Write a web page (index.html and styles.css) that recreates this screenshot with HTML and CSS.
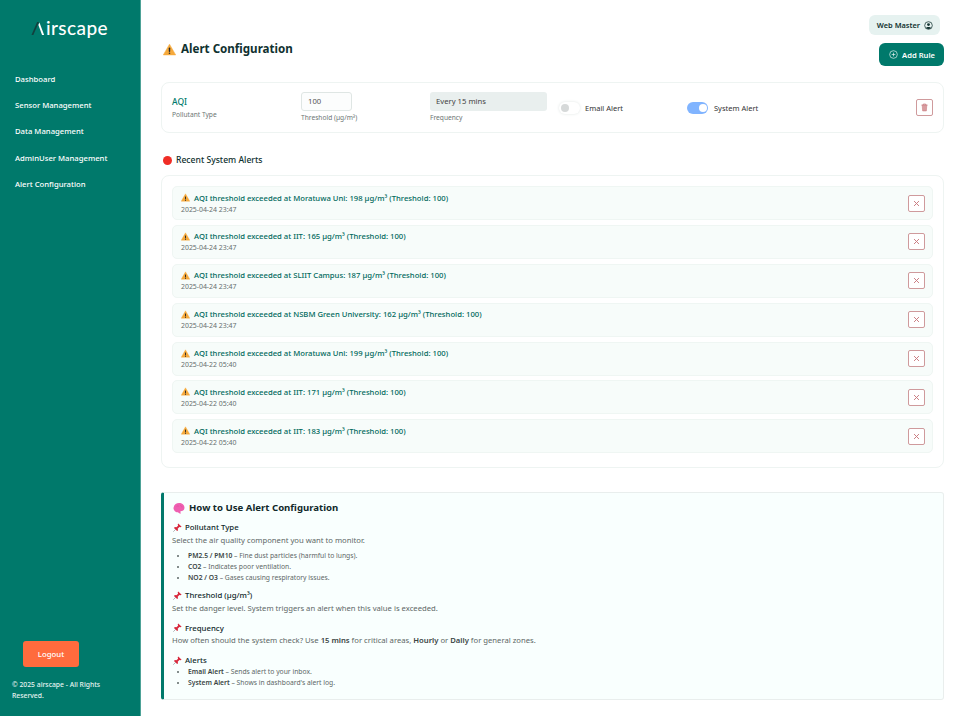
FILE: index.html
```html
<!DOCTYPE html>
<html lang="en">
<head>
<meta charset="utf-8">
<title>Alert Configuration</title>
<link rel="stylesheet" href="styles.css">
</head>
<body>
<svg class="defs" width="0" height="0" aria-hidden="true">
  <defs>
    <symbol id="warn" viewBox="0 0 24 24">
      <path d="M12 2.2 23.4 22H.6Z" fill="#f6a93b" stroke="#f6a93b" stroke-linejoin="round" stroke-width="1"/>
      <rect x="10.7" y="8.5" width="2.6" height="8" rx="1.2" fill="#2b2b2b"/>
      <circle cx="12" cy="19" r="1.5" fill="#2b2b2b"/>
    </symbol>
    <symbol id="pin" viewBox="0 0 24 24">
      <path d="M14 1 23 10 20 11.500 17 10.500 12.500 15 13.500 19 11 21.500 2.500 13 5 10.500 9 11.500 13.500 7 12.500 4Z" fill="#d9283c"/>
      <path d="M7 17 1.500 22.500" stroke="#8a8f94" stroke-width="1.800" stroke-linecap="round"/>
    </symbol>
    <symbol id="close" viewBox="0 0 16 16">
      <path d="M5 5 11 11M11 5 5 11" stroke="#c9797e" stroke-width="1.200" fill="none"/>
    </symbol>
  </defs>
</svg>
<div class="app">
  <aside class="sidebar">
    <div class="logo">
      <svg class="logo-mark" viewBox="0 0 16 16" aria-hidden="true">
        <path d="M.5 15 6.500 1H8.500L2.500 15Z" fill="#12403f"/>
        <path d="M9 1.500 14 15H11.800L7.900 4.200Z" fill="#ffffff"/>
      </svg>
      <span>irscape</span>
    </div>
    <nav class="nav">
      <a>Dashboard</a>
      <a>Sensor Management</a>
      <a>Data Management</a>
      <a>AdminUser Management</a>
      <a>Alert Configuration</a>
    </nav>
    <div class="side-foot">
      <button class="logout">Logout</button>
      <p class="copy">© 2025 airscape - All Rights Reserved.</p>
    </div>
  </aside>
  <main class="main">
    <header class="top">
      <h1 class="title"><svg class="ic-title"><use href="#warn"/></svg>Alert Configuration</h1>
      <div class="top-actions">
        <div class="user">Web Master
          <svg class="user-ic" viewBox="0 0 16 16" aria-hidden="true">
            <circle cx="8" cy="8" r="6.800" fill="none" stroke="#10312f" stroke-width="1.300"/>
            <circle cx="8" cy="6.300" r="2.500" fill="#10312f"/>
            <path d="M3.500 12.500C4.500 10 11.500 10 12.500 12.500 10 15 6 15 3.500 12.500Z" fill="#10312f"/>
          </svg>
        </div>
        <button class="add">
          <svg class="add-ic" viewBox="0 0 16 16" aria-hidden="true">
            <circle cx="8" cy="8" r="6.800" fill="none" stroke="#fff" stroke-width="1.100"/>
            <path d="M8 4.700V11.300M4.700 8H11.300" stroke="#fff" stroke-width="1.100"/>
          </svg>Add Rule
        </button>
      </div>
    </header>

    <section class="card rule">
      <div class="f-type">
        <div class="aqi">AQI</div>
        <div class="cap">Pollutant Type</div>
      </div>
      <div class="f-th">
        <div class="input">100</div>
        <div class="cap">Threshold (µg/m³)</div>
      </div>
      <div class="f-freq">
        <div class="select">Every 15 mins</div>
        <div class="cap">Frequency</div>
      </div>
      <div class="f-email">
        <span class="switch off"><i></i></span>
        <span class="sw-label">Email Alert</span>
      </div>
      <div class="f-sys">
        <span class="switch on"><i></i></span>
        <span class="sw-label">System Alert</span>
      </div>
      <button class="del trash" aria-label="Delete">
        <svg viewBox="0 0 16 16" aria-hidden="true">
          <path d="M3.500 4.500H12.500M6.300 4.300V3H9.700V4.300" stroke="#c9797e" stroke-width="1.100" fill="none"/>
          <path d="M4.700 4.500 5.300 13H10.700L11.300 4.500Z" fill="#d99ea1" stroke="#c9797e" stroke-width=".8"/>
        </svg>
      </button>
    </section>

    <h2 class="recent"><i class="dot"></i>Recent System Alerts</h2>

    <section class="card alerts">
      <article class="alert">
        <div class="a-body">
          <div class="a-msg"><svg class="ic-a"><use href="#warn"/></svg>AQI threshold exceeded at Moratuwa Uni: 198 µg/m³ (Threshold: 100)</div>
          <div class="a-time">2025-04-24 23:47</div>
        </div>
        <button class="del" aria-label="Dismiss"><svg viewBox="0 0 16 16"><use href="#close"/></svg></button>
      </article>
      <article class="alert">
        <div class="a-body">
          <div class="a-msg"><svg class="ic-a"><use href="#warn"/></svg>AQI threshold exceeded at IIT: 165 µg/m³ (Threshold: 100)</div>
          <div class="a-time">2025-04-24 23:47</div>
        </div>
        <button class="del" aria-label="Dismiss"><svg viewBox="0 0 16 16"><use href="#close"/></svg></button>
      </article>
      <article class="alert">
        <div class="a-body">
          <div class="a-msg"><svg class="ic-a"><use href="#warn"/></svg>AQI threshold exceeded at SLIIT Campus: 187 µg/m³ (Threshold: 100)</div>
          <div class="a-time">2025-04-24 23:47</div>
        </div>
        <button class="del" aria-label="Dismiss"><svg viewBox="0 0 16 16"><use href="#close"/></svg></button>
      </article>
      <article class="alert">
        <div class="a-body">
          <div class="a-msg"><svg class="ic-a"><use href="#warn"/></svg>AQI threshold exceeded at NSBM Green University: 162 µg/m³ (Threshold: 100)</div>
          <div class="a-time">2025-04-24 23:47</div>
        </div>
        <button class="del" aria-label="Dismiss"><svg viewBox="0 0 16 16"><use href="#close"/></svg></button>
      </article>
      <article class="alert">
        <div class="a-body">
          <div class="a-msg"><svg class="ic-a"><use href="#warn"/></svg>AQI threshold exceeded at Moratuwa Uni: 199 µg/m³ (Threshold: 100)</div>
          <div class="a-time">2025-04-22 05:40</div>
        </div>
        <button class="del" aria-label="Dismiss"><svg viewBox="0 0 16 16"><use href="#close"/></svg></button>
      </article>
      <article class="alert">
        <div class="a-body">
          <div class="a-msg"><svg class="ic-a"><use href="#warn"/></svg>AQI threshold exceeded at IIT: 171 µg/m³ (Threshold: 100)</div>
          <div class="a-time">2025-04-22 05:40</div>
        </div>
        <button class="del" aria-label="Dismiss"><svg viewBox="0 0 16 16"><use href="#close"/></svg></button>
      </article>
      <article class="alert">
        <div class="a-body">
          <div class="a-msg"><svg class="ic-a"><use href="#warn"/></svg>AQI threshold exceeded at IIT: 183 µg/m³ (Threshold: 100)</div>
          <div class="a-time">2025-04-22 05:40</div>
        </div>
        <button class="del" aria-label="Dismiss"><svg viewBox="0 0 16 16"><use href="#close"/></svg></button>
      </article>
    </section>

    <section class="guide">
      <h3 class="g-title">
        <svg class="ic-brain" viewBox="0 0 24 24" aria-hidden="true">
          <path d="M6 20C2 18 0 14 1.500 10 2.500 5 7 2 12 2 18 2 23 6 23 11.500 23 16 19 18.500 15 18.500 14.500 20.500 15 22 16 23 13 23 11 22 10 20.500 8.500 21 7 20.500 6 20Z" fill="#ee5fb0"/>
          <path d="M7 9C9 7 11 8 12 9M14 7C16 7 18 8 18 11" stroke="#d8469a" stroke-width="1" fill="none"/>
        </svg>How to Use Alert Configuration
      </h3>
      <h4 class="g-head"><svg class="ic-pin"><use href="#pin"/></svg>Pollutant Type</h4>
      <p class="g-text">Select the air quality component you want to monitor.</p>
      <ul class="g-list first">
        <li><b>PM2.5 / PM10</b> – Fine dust particles (harmful to lungs).</li>
        <li><b>CO2</b> – Indicates poor ventilation.</li>
        <li><b>NO2 / O3</b> – Gases causing respiratory issues.</li>
      </ul>
      <h4 class="g-head"><svg class="ic-pin"><use href="#pin"/></svg>Threshold (µg/m³)</h4>
      <p class="g-text">Set the danger level. System triggers an alert when this value is exceeded.</p>
      <h4 class="g-head"><svg class="ic-pin"><use href="#pin"/></svg>Frequency</h4>
      <p class="g-text">How often should the system check? Use <b>15 mins</b> for critical areas, <b>Hourly</b> or <b>Daily</b> for general zones.</p>
      <h4 class="g-head"><svg class="ic-pin"><use href="#pin"/></svg>Alerts</h4>
      <ul class="g-list tight">
        <li><b>Email Alert</b> – Sends alert to your inbox.</li>
        <li><b>System Alert</b> – Shows in dashboard's alert log.</li>
      </ul>
    </section>
  </main>
</div>
</body>
</html>
```
FILE: styles.css
```css
* { box-sizing: border-box; }
html, body { margin: 0; padding: 0; background: #fff; }
body { font-family: "Noto Sans", "Open Sans", sans-serif; color: #10312f; overflow: hidden; }
.defs { position: absolute; }
.app { display: flex; height: 716px; }

.sidebar { width: 141px; flex: none; background: #00796b; border-right: 1px solid #4da297; display: flex; flex-direction: column; color: #fff; padding: 0 12px 0 15px; }
.logo { display: flex; align-items: center; justify-content: center; height: 20px; margin: 18px 4px 0 0; font-family: "Lato", sans-serif; font-size: 19px; line-height: 20px; font-weight: 500; letter-spacing: .4px; }
.logo-mark { width: 15px; height: 15px; }
.nav { display: flex; flex-direction: column; gap: 14.2px; margin-top: 35px; }
.nav a { font-size: 7.7px; line-height: 12px; font-weight: 500; white-space: nowrap; }
.side-foot { margin-top: auto; padding-bottom: 15px; margin-left: -3px; }
.logout { display: block; margin-left: 11px; width: 56px; height: 26px; background: #ff6b3d; border: 0; border-radius: 3px; color: #fff; font: 500 7.8px "Noto Sans", sans-serif; }
.copy { margin: 12px 0 0; font-size: 6.8px; line-height: 11px; font-weight: 500; color: #e6f4f1; }

.main { flex: 1; min-width: 0; padding: 15px 20px 0 20px; }
.top { display: flex; justify-content: space-between; align-items: flex-start; height: 67px; }
.title { margin: 26px 0 0 2px; display: flex; align-items: center; font-size: 11.6px; line-height: 16px; font-weight: 700; }
.ic-title { width: 13px; height: 13px; margin-right: 5px; }
.top-actions { display: flex; flex-direction: column; align-items: flex-end; }
.user { display: flex; align-items: center; gap: 4px; height: 20px; padding: 0 7px 0 8px; margin-right: 4px; background: #e6f2f0; border-radius: 6px; font-size: 7.4px; font-weight: 600; }
.user-ic { width: 9px; height: 9px; }
.add { display: flex; align-items: center; gap: 4px; height: 23px; margin-top: 8px; padding: 0 9px 0 10px; background: #00796b; border: 0; border-radius: 6px; color: #fff; font: 600 7.6px "Noto Sans", sans-serif; }
.add-ic { width: 9px; height: 9px; }

.card { background: #fff; border: 1px solid #eef4f2; border-radius: 8px; }
.rule { display: flex; align-items: center; height: 51px; padding: 0 10px; }
.f-type { width: 129px; }
.aqi { font-size: 8.5px; line-height: 12px; font-weight: 500; color: #00796b; }
.cap { font-size: 6.65px; line-height: 10px; margin-top: 2px; color: #6d7675; }
.f-th { width: 129px; }
.input { width: 51px; height: 19px; padding: 0 6px; border: 1px solid #dfe6e4; border-radius: 3px; background: #fcfdfd; font-size: 7.7px; line-height: 17px; color: #555; }
.f-freq { width: 129px; }
.select { width: 117px; height: 19px; padding: 0 6px; background: #e9efee; border-radius: 3px; font-size: 7.7px; line-height: 19px; color: #444; }
.f-email { width: 128px; display: flex; align-items: center; gap: 5px; }
.f-sys { display: flex; align-items: center; gap: 6px; flex: 1; }
.sw-label { font-size: 7.5px; color: #333; }
.switch { width: 21px; height: 12px; border-radius: 6px; display: flex; align-items: center; padding: 0 1.5px; }
.switch i { display: block; width: 8px; height: 8px; border-radius: 50%; }
.switch.off { background: #fff; box-shadow: 0 0 3px #dfe5e3; }
.switch.off i { background: #d6d9d9; }
.switch.on { background: #80b4ff; justify-content: flex-end; }
.switch.on i { background: #fff; }

.del { flex: none; width: 17px; height: 17px; padding: 0; background: #fff; border: 1px solid #cf9a9c; border-radius: 2px; display: flex; align-items: center; justify-content: center; }
.del svg { width: 13px; height: 13px; }
.trash svg { width: 11px; height: 11px; }

.recent { margin: 21px 0 9px 2px; display: flex; align-items: center; height: 12px; font-size: 8.6px; line-height: 12px; font-weight: 500; }
.dot { width: 9px; height: 9px; border-radius: 50%; background: #f02d26; margin-right: 4px; }

.alerts { height: 293px; padding: 10px; display: flex; flex-direction: column; gap: 4.9px; }
.alert { height: 34px; flex: none; display: flex; align-items: center; justify-content: space-between; padding: 0 7px 0 8px; background: #f7fcfa; border: 1px solid #eff6f3; border-radius: 5px; }
.a-msg { display: flex; align-items: center; font-size: 7.7px; line-height: 12px; font-weight: 500; color: #00695c; }
.ic-a { width: 9px; height: 9px; margin-right: 4px; }
.a-time { font-size: 6.9px; line-height: 10px; margin-top: 1px; color: #666f6e; }

.guide { margin-top: 24px; height: 208px; padding: 8px 10px 0 8px; background: #f9fffe; border: 1px solid #e9eeed; border-left: 3px solid #00796b; border-radius: 3px; }
.g-title { margin: 0; display: flex; align-items: center; font-size: 9.6px; line-height: 14px; font-weight: 700; color: #10282a; }
.ic-brain { width: 12px; height: 12px; margin-right: 4px; margin-left: 1px; }
.g-head { margin: 7.5px 0 0; display: flex; align-items: center; font-size: 7.8px; line-height: 12.5px; font-weight: 500; color: #10282a; }
.g-title + .g-head { margin-top: 6px; }
.ic-pin { width: 9px; height: 9px; margin-right: 3px; margin-left: 1px; }
.g-text { margin: 0; font-size: 7.68px; line-height: 12.5px; color: #5d6766; }
.g-text b, .g-list b { font-weight: 600; color: #3a4544; }
.g-list { margin: 0; padding: 0 0 0 16px; font-size: 6.76px; line-height: 11px; color: #5d6766; }
.g-list.first { margin-top: 3.5px; margin-bottom: -1px; }
.g-list.tight { margin-top: -1px; }
```
